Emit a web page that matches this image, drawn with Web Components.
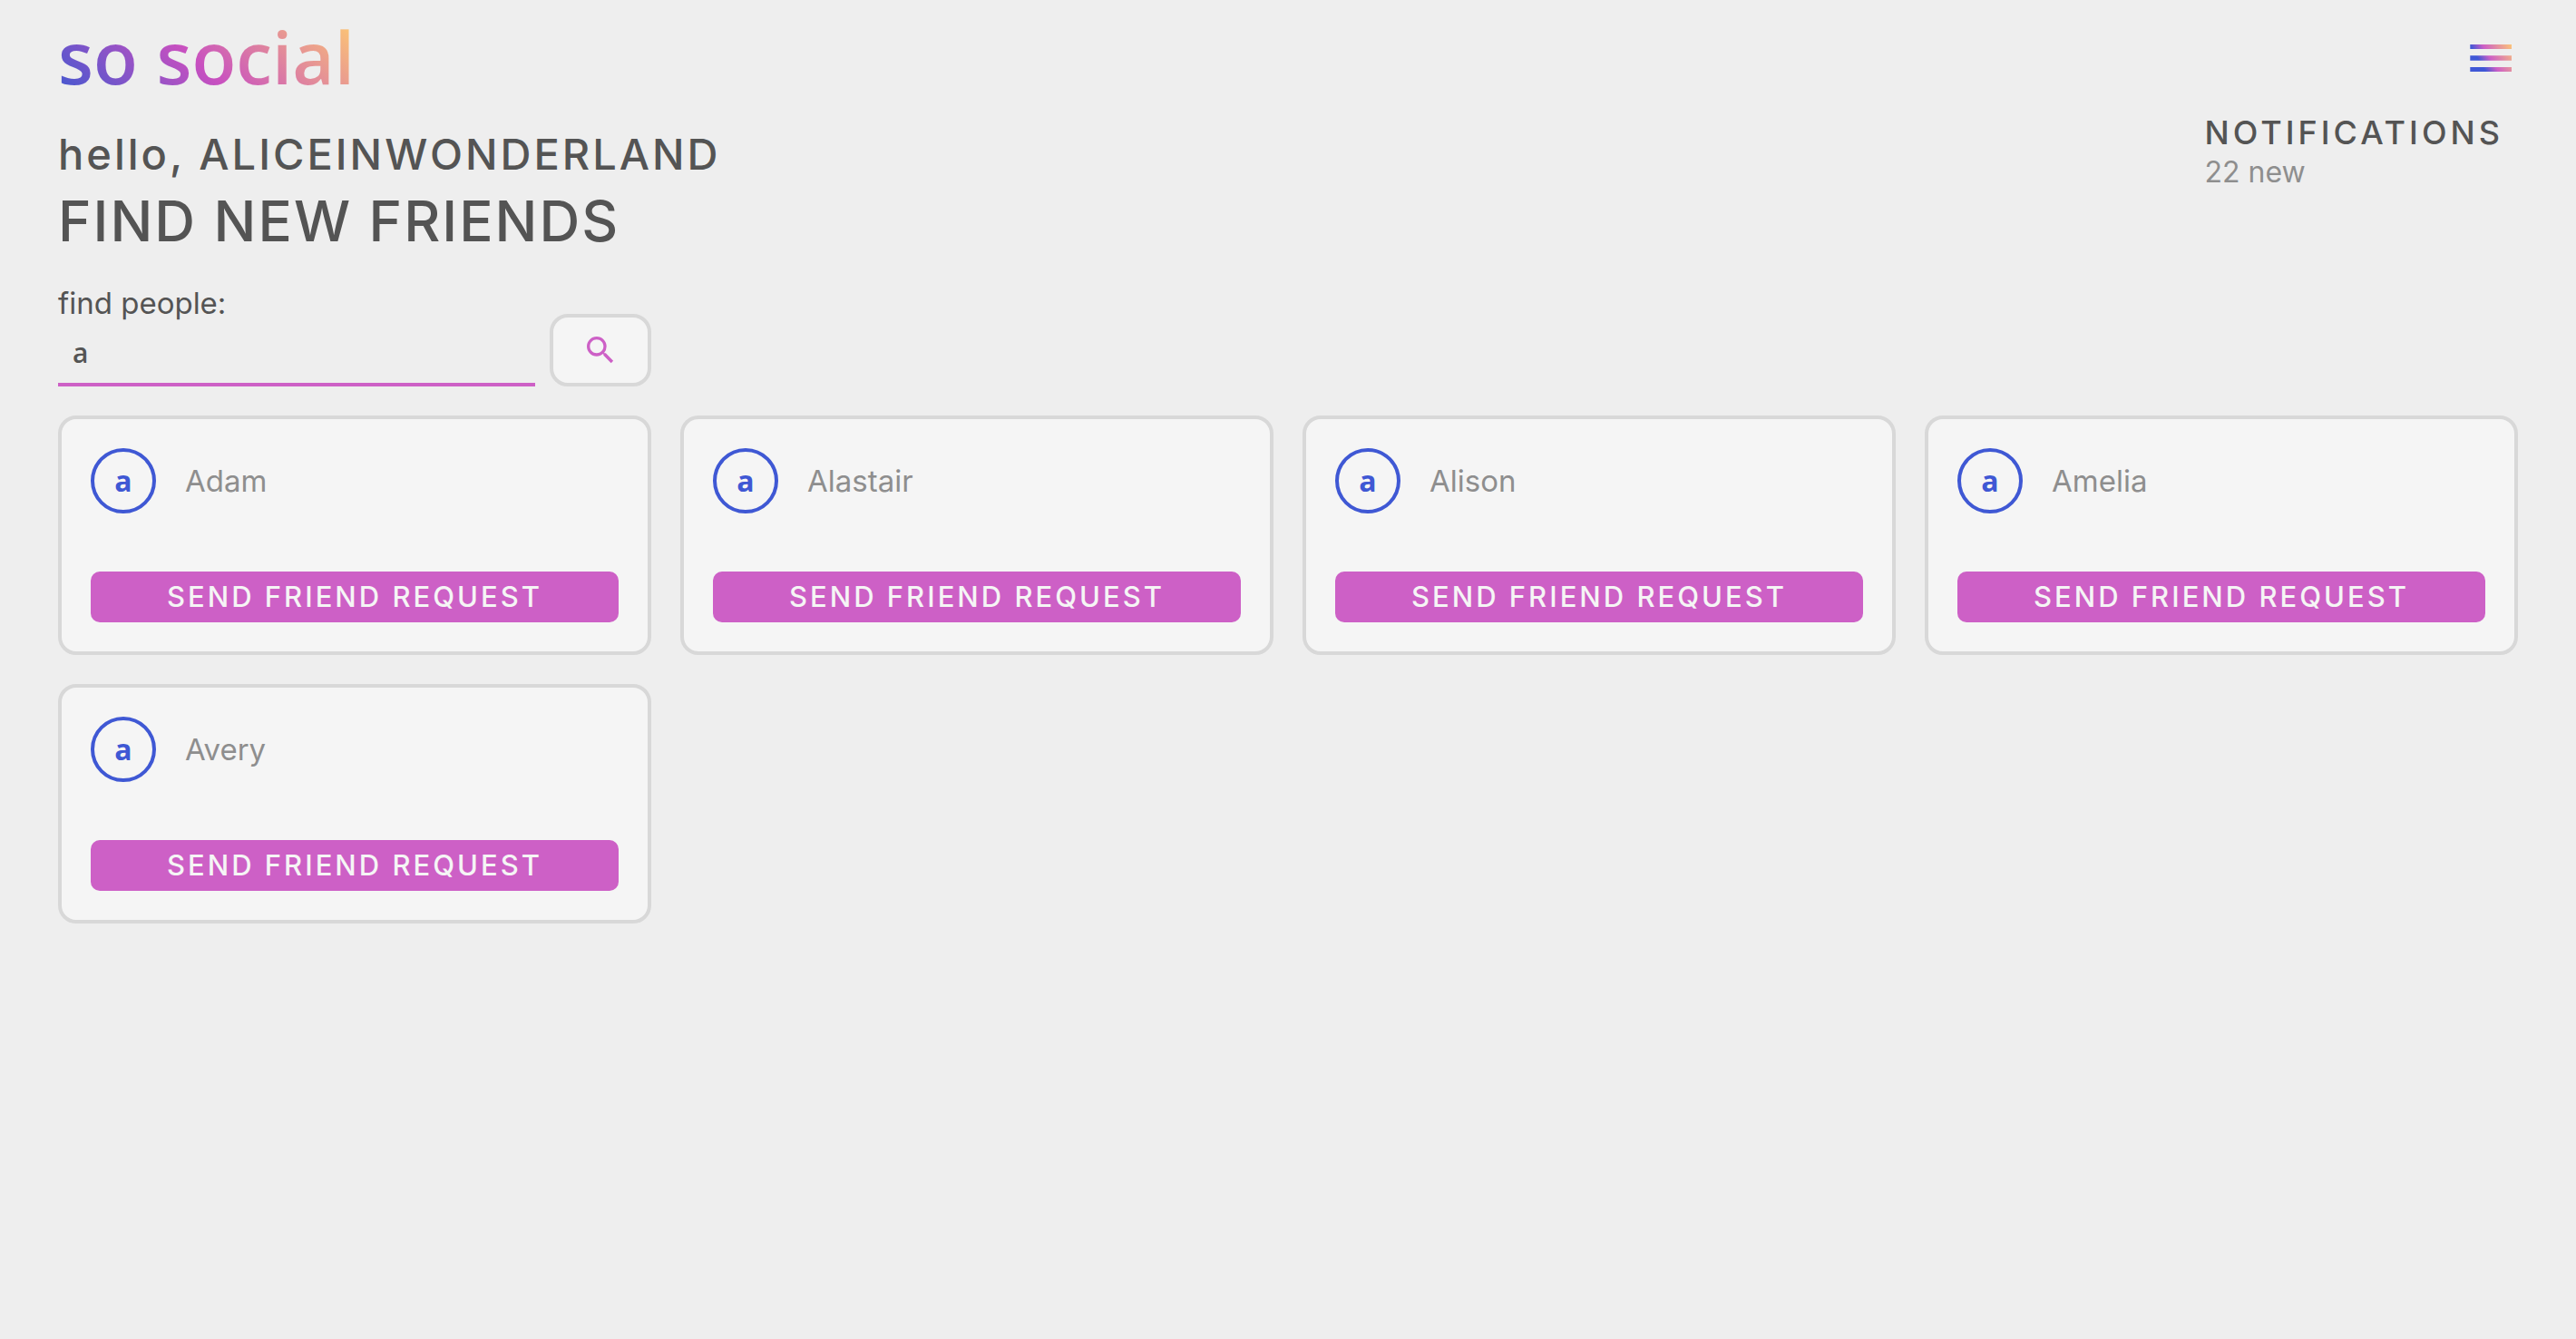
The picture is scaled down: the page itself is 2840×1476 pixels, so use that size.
<!DOCTYPE html>
<html lang="en">
<head>
<meta charset="utf-8">
<title>so social</title>
<style>
  body {
    margin: 0;
    min-height: 100vh;
    background: #eeeeee;
    color: #545454;
    font-family: Inter, "Open Sans", sans-serif;
    font-size: 33px;
    line-height: 48px;
    --display: "Open Sans", Lato, sans-serif;
    --pink: #cd60c6;
    --blue: #3f58d4;
    --muted: #8e8e8e;
    --surface: #f5f5f5;
    --line: #d8d8d8;
  }
</style>
</head>
<body>
<social-app></social-app>

<script>
  class BaseElement extends HTMLElement {
    constructor() {
      super();
      this.attachShadow({ mode: "open" }).innerHTML =
        "<style>*{box-sizing:border-box}" + this.constructor.css + "</style>";
    }
    connectedCallback() {
      if (this.ready) return;
      this.ready = true;
      this.shadowRoot.innerHTML += this.render();
    }
  }

  customElements.define("site-header", class extends BaseElement {
    static css = `
      :host { display: flex; justify-content: space-between; align-items: center; height: 124px; }
      .logo {
        font: 600 80px/84px var(--display);
        text-decoration: none;
        color: transparent;
        background: linear-gradient(43deg, #4158d0 0%, #c850c0 46%, #ffcc70 100%);
        -webkit-background-clip: text;
        background-clip: text;
      }
      button { display: flex; border: 0; padding: 0; background: none; }
      svg { width: 60px; height: 60px; }
    `;
    render() {
      return `
        <a class="logo" href="#">so social</a>
        <button type="button" aria-label="Menu">
          <svg viewBox="0 0 60 60" aria-hidden="true">
            <defs>
              <linearGradient id="g" gradientUnits="userSpaceOnUse" x1="8" y1="19.5" x2="41.4" y2="-0.5">
                <stop offset="0" stop-color="#3f57d6"/>
                <stop offset=".31" stop-color="#cd5fc6"/>
                <stop offset="1" stop-color="#fbc27b"/>
              </linearGradient>
            </defs>
            <path fill="url(#g)" d="M7.3 17h45.7v5H7.3zM7.3 29.3h45.7v5.4H7.3zM7.3 42h45.7v5H7.3z"/>
          </svg>
        </button>`;
    }
  });

  customElements.define("page-heading", class extends BaseElement {
    static css = `
      :host { display: block; }
      p, h1 { margin: 0; font-weight: 500; }
      p { font-size: 47px; line-height: 72px; letter-spacing: 3px; }
      h1 { font-size: 62px; line-height: 76px; letter-spacing: 2px; text-transform: uppercase; }
    `;
    render() {
      return `<p>hello, <slot name="user"></slot></p><h1><slot></slot></h1>`;
    }
  });

  customElements.define("notification-summary", class extends BaseElement {
    static css = `
      :host { display: block; }
      a { display: block; padding-right: 16px; color: inherit; text-decoration: none; }
      strong { display: block; font-size: 36px; line-height: 44px; font-weight: 500; letter-spacing: 4px; text-transform: uppercase; }
      span { display: block; font-size: 32px; line-height: 44px; color: var(--muted); }
    `;
    render() {
      return `<a href="#"><strong>Notifications</strong><span>${this.getAttribute("count")} new</span></a>`;
    }
  });

  customElements.define("people-search", class extends BaseElement {
    static css = `
      :host { display: block; }
      form { display: grid; grid-template-columns: 1fr 112px; column-gap: 16px; align-items: end; }
      .field { display: flex; flex-direction: column; }
      input {
        width: 100%; height: 68px; padding: 0 16px 4px;
        border: 0; border-bottom: 4px solid var(--pink); border-radius: 0; outline: 0;
        background: none; color: inherit; font: 600 30px/40px var(--display);
      }
      button {
        display: flex; align-items: center; justify-content: center;
        height: 80px; padding: 0;
        border: 4px solid var(--line); border-radius: 20px; background: var(--surface);
      }
      svg { width: 40px; height: 40px; fill: var(--pink); }
    `;
    render() {
      return `
        <form>
          <div class="field">
            <label for="q">find people:</label>
            <input id="q" type="text" value="${this.getAttribute("value")}">
          </div>
          <button type="button" aria-label="Search">
            <svg viewBox="0 0 24 24" aria-hidden="true"><path d="M15.5 14h-.79l-.28-.27A6.47 6.47 0 0 0 16 9.5 6.5 6.5 0 1 0 9.5 16c1.61 0 3.09-.59 4.23-1.57l.27.28v.79l5 4.99L20.49 19l-4.99-5zm-6 0C7.01 14 5 11.99 5 9.5S7.01 5 9.5 5 14 7.01 14 9.5 11.99 14 9.5 14z"/></svg>
          </button>
        </form>`;
    }
  });

  customElements.define("friend-card", class extends BaseElement {
    static css = `
      :host {
        display: flex; flex-direction: column; gap: 64px; padding: 32px;
        border: 4px solid var(--line); border-radius: 20px; background: var(--surface);
      }
      .person { display: flex; align-items: center; gap: 32px; color: var(--muted); }
      .avatar {
        display: flex; align-items: center; justify-content: center;
        width: 72px; height: 72px;
        border: 4px solid var(--blue); border-radius: 50%;
        color: var(--blue); font: 700 32px/48px var(--display);
      }
      button {
        height: 56px; padding: 0; border: 0; border-radius: 10px;
        background: var(--pink); color: var(--surface);
        font: 500 31px/48px Inter, "Open Sans", sans-serif;
        letter-spacing: 3px; text-transform: uppercase;
      }
    `;
    render() {
      return `
        <div class="person"><span class="avatar">a</span><slot></slot></div>
        <button type="button">Send friend request</button>`;
    }
  });

  customElements.define("social-app", class extends BaseElement {
    static css = `
      :host { display: block; padding: 0 64px; }
      .intro { display: flex; justify-content: space-between; align-items: flex-start; }
      page-heading { padding-top: 10px; }
      .grid { display: grid; grid-template-columns: repeat(4, 1fr); gap: 32px; margin-top: 28px; }
      people-search { grid-column: 1 / 2; }
      friend-card:nth-of-type(1) { grid-column-start: 1; }
    `;
    render() {
      const people = ["Adam", "Alastair", "Alison", "Amelia", "Avery"];
      return `
        <site-header></site-header>
        <main>
          <div class="intro">
            <page-heading><span slot="user">ALICEINWONDERLAND</span>Find new friends</page-heading>
            <notification-summary count="22"></notification-summary>
          </div>
          <div class="grid">
            <people-search value="a"></people-search>
            ${people.map(n => `<friend-card>${n}</friend-card>`).join("")}
          </div>
        </main>`;
    }
  });
</script>
</body>
</html>
